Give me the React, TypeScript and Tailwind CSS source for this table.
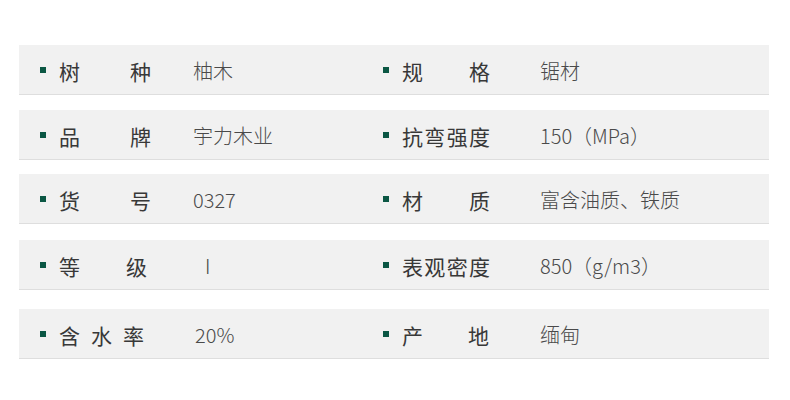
import React from 'react';

type Cell = { label: string[]; value: string; labelW: number; valueX: number };
type Row = { mt: string; left: Cell; right: Cell };

// label chars are spread across labelW; value starts valueX px after the label start
const rows: Row[] = [
  {
    mt: 'mt-[45px]',
    left: { label: ['树', '种'], value: '柚木', labelW: 92, valueX: 134 },
    right: { label: ['规', '格'], value: '锯材', labelW: 88, valueX: 138 },
  },
  {
    mt: 'mt-[15px]',
    left: { label: ['品', '牌'], value: '宇力木业', labelW: 92, valueX: 134 },
    right: { label: ['抗', '弯', '强', '度'], value: '150（MPa）', labelW: 88, valueX: 138 },
  },
  {
    mt: 'mt-[14px]',
    left: { label: ['货', '号'], value: '0327', labelW: 92, valueX: 134 },
    right: { label: ['材', '质'], value: '富含油质、铁质', labelW: 88, valueX: 138 },
  },
  {
    mt: 'mt-[16px]',
    left: { label: ['等', '级'], value: 'I', labelW: 88, valueX: 146 },
    right: { label: ['表', '观', '密', '度'], value: '850（g/m3）', labelW: 88, valueX: 138 },
  },
  {
    mt: 'mt-[19px]',
    left: { label: ['含', '水', '率'], value: '20%', labelW: 85, valueX: 136 },
    right: { label: ['产', '地'], value: '缅甸', labelW: 87, valueX: 138 },
  },
];

function Spec({ cell, first }: { cell: Cell; first?: boolean }) {
  return (
    <div className={`flex items-center ${first ? 'w-[364px] pl-[21px]' : 'flex-1'}`}>
      <span className="mr-[13px] mb-[2px] h-[6px] w-[6px] shrink-0 bg-[#0b5744]" />
      <div className="flex shrink-0 items-center" style={{ width: cell.valueX }}>
        <div
          className="flex justify-between text-[21px] font-normal leading-none text-[#383838]"
          style={{ width: cell.labelW }}
        >
          {cell.label.map((c, i) => (
            <span key={i}>{c}</span>
          ))}
        </div>
      </div>
      <span className="text-[20px] font-light leading-none text-[#4a4a4a]">{cell.value}</span>
    </div>
  );
}

export default function App() {
  return (
    <div
      className="h-[400px] w-[790px] bg-white px-[19px]"
      style={{ fontFamily: '"Noto Sans CJK SC", "Noto Sans", sans-serif' }}
    >
      <div className="flex flex-col w-[750px]">
        {rows.map((r, i) => (
          <div
            key={i}
            className={`${r.mt} flex h-[50px] items-center border-b border-[#dedede] bg-[#f1f1f1] pt-[3px]`}
          >
            <Spec cell={r.left} first />
            <Spec cell={r.right} />
          </div>
        ))}
      </div>
    </div>
  );
}
